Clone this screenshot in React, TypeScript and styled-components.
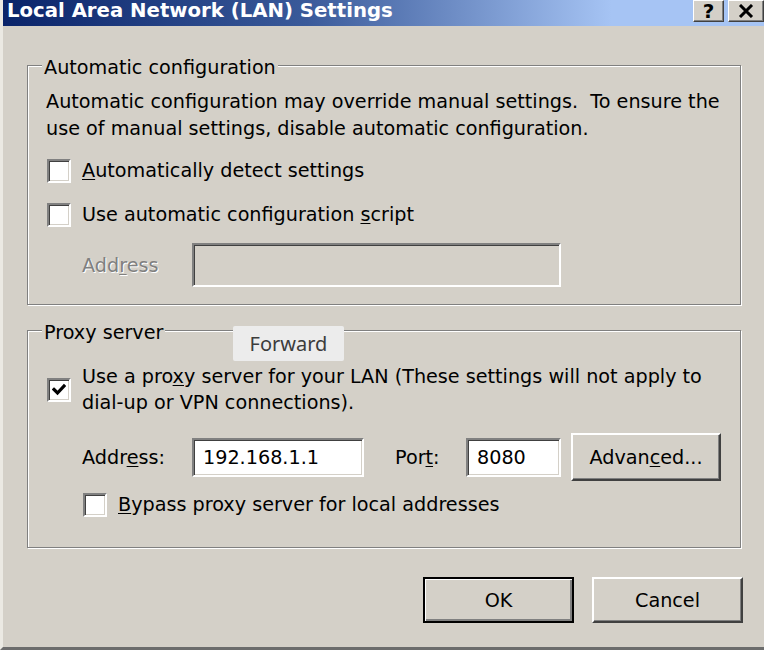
import React from "react";
import styled, { createGlobalStyle } from "styled-components";

const FACE = "#d4d0c8";
const FONT = `"DejaVu Sans", Verdana, sans-serif`;

const GlobalStyle = createGlobalStyle`
  html, body {
    margin: 0;
    padding: 0;
    background: ${FACE};
    overflow: hidden;
  }
  * { box-sizing: border-box; }
`;

const Window = styled.div`
  position: relative;
  width: 764px;
  height: 650px;
  background: ${FACE};
  border-left: 3px solid #ebe9e3;
  border-bottom: 3px solid #6c6c6c;
  display: flex;
  flex-direction: column;
  font-family: ${FONT};
  font-size: 19.2px;
  color: #000;
`;

const TitleBar = styled.div`
  height: 26px;
  flex: none;
  padding: 0 0 4px 4px;
  display: flex;
  align-items: center;
  background: linear-gradient(90deg, #0a246a 0%, #3a5a9a 40%, #a6c4f4 80%, #a6c4f4 100%);
`;

const Title = styled.span`
  flex: 1;
  color: #fff;
  font: bold 19.7px/22px ${FONT};
  white-space: nowrap;
`;

const CaptionButton = styled.div<{ $w: number }>`
  width: ${(p) => p.$w}px;
  height: 22px;
  margin-left: 4px;
  background: ${FACE};
  border: 1px solid;
  border-color: #fff #404040 #404040 #fff;
  box-shadow: inset -1px -1px #808080;
  display: flex;
  align-items: center;
  justify-content: center;
  font: bold 20px/20px ${FONT};
  color: #000;
`;

const Body = styled.div`
  flex: 1;
  padding: 25px 23px 0 24px;
  display: flex;
  flex-direction: column;
`;

const GroupBox = styled.fieldset<{ $pt: number; $pb: number; $mt?: number }>`
  margin: ${(p) => p.$mt ?? 0}px 0 0 0;
  min-width: 0;
  padding: ${(p) => p.$pt}px 20px ${(p) => p.$pb}px 18px;
  border: 1px solid #808080;
  box-shadow: inset 1px 1px #fff, 1px 1px #fff;
  display: flex;
  flex-direction: column;
`;

const Legend = styled.legend`
  margin-left: -4px;
  padding: 6px 2px 0;
  line-height: 22px;
  background: ${FACE};
`;

const Paragraph = styled.p`
  margin: 0;
  line-height: 27px;
  white-space: nowrap;
`;

const CheckRow = styled.div<{ $indent?: number; $mt?: number }>`
  display: flex;
  align-items: center;
  gap: 11px;
  min-height: 30px;
  margin-top: ${(p) => p.$mt ?? 0}px;
  margin-left: ${(p) => p.$indent ?? 1}px;
`;

const CheckBox = styled.span`
  flex: none;
  width: 24px;
  height: 24px;
  background: #fff;
  border: 2px solid;
  border-color: #808080 #fff #fff #808080;
  box-shadow: inset 1px 1px #404040, inset -1px -1px ${FACE};
  display: flex;
  align-items: center;
  justify-content: center;
`;

const CheckLabel = styled.span`
  line-height: 26px;
  white-space: nowrap;
`;

const FieldRow = styled.div<{ $mt: number }>`
  display: flex;
  align-items: center;
  margin-top: ${(p) => p.$mt}px;
  margin-left: 36px;
`;

const FieldLabel = styled.span<{ $w: number; $ml?: number; $disabled?: boolean }>`
  flex: none;
  width: ${(p) => p.$w}px;
  margin-left: ${(p) => p.$ml ?? 0}px;
  white-space: nowrap;
  color: ${(p) => (p.$disabled ? "#808080" : "#000")};
  text-shadow: ${(p) => (p.$disabled ? "1px 1px 0 #fff" : "none")};
`;

const TextBox = styled.input<{ $w: number; $h: number; $disabled?: boolean }>`
  flex: none;
  width: ${(p) => p.$w}px;
  height: ${(p) => p.$h}px;
  margin: 0;
  padding: 0 0 0 9px;
  background: ${(p) => (p.$disabled ? FACE : "#fff")};
  border: 2px solid;
  border-color: #808080 #fff #fff #808080;
  box-shadow: inset 1px 1px #404040, inset -1px -1px ${FACE};
  font: 19.2px ${FONT};
  color: #000;
  outline: none;
`;

const PushButton = styled.button<{ $w: number; $h: number; $default?: boolean; $ml?: number }>`
  flex: none;
  width: ${(p) => p.$w}px;
  height: ${(p) => p.$h}px;
  margin: 0 0 0 ${(p) => p.$ml ?? 0}px;
  padding: 0;
  background: ${FACE};
  font: 19.2px ${FONT};
  color: #000;
  border: 2px solid;
  border-color: ${(p) => (p.$default ? "#000" : "#fff #404040 #404040 #fff")};
  box-shadow: ${(p) =>
    p.$default
      ? "inset 1px 1px #fff, inset -2px -2px #808080"
      : "inset -1px -1px #808080"};
  cursor: default;
`;

const Footer = styled.div`
  display: flex;
  justify-content: flex-end;
  gap: 18px;
  margin: 29px -2px 0 0;
`;

const Key = styled.span`
  text-decoration: underline;
  text-underline-offset: 2px;
  text-decoration-thickness: 1px;
`;

const Tooltip = styled.div`
  position: absolute;
  left: 230px;
  top: 326px;
  width: 111px;
  height: 35px;
  border-radius: 2px;
  background: #ececec;
  color: #3c3c3c;
  font: 20px/35px "Noto Sans", sans-serif;
  text-align: center;
`;

const Check = () => (
  <svg width="14" height="14" viewBox="0 0 14 14">
    <path d="M2 6.5 L5.5 10 L12 3" fill="none" stroke="#000" strokeWidth="3.2" strokeLinecap="square" />
  </svg>
);

const CloseGlyph = () => (
  <svg width="16" height="14" viewBox="0 0 16 14">
    <path d="M2 1 L14 13 M14 1 L2 13" stroke="#000" strokeWidth="3" />
  </svg>
);

export default function App() {
  return (
    <>
      <GlobalStyle />
      <Window>
        <TitleBar>
          <Title>Local Area Network (LAN) Settings</Title>
          <CaptionButton $w={31}>?</CaptionButton>
          <CaptionButton $w={36}>
            <CloseGlyph />
          </CaptionButton>
        </TitleBar>
        <Body>
          <GroupBox $pt={9} $pb={17}>
            <Legend>Automatic configuration</Legend>
            <Paragraph>
              Automatic configuration may override manual settings.{"\u00a0"} To ensure the
              <br />
              use of manual settings, disable automatic configuration.
            </Paragraph>
            <CheckRow $mt={14}>
              <CheckBox />
              <CheckLabel>
                <Key>A</Key>utomatically detect settings
              </CheckLabel>
            </CheckRow>
            <CheckRow $mt={14}>
              <CheckBox />
              <CheckLabel>
                Use automatic configuration <Key>s</Key>cript
              </CheckLabel>
            </CheckRow>
            <FieldRow $mt={13}>
              <FieldLabel $w={110} $disabled>
                Add<Key>r</Key>ess
              </FieldLabel>
              <TextBox $w={369} $h={44} $disabled readOnly defaultValue="" />
            </FieldRow>
          </GroupBox>

          <GroupBox $pt={20} $pb={27} $mt={11}>
            <Legend>Proxy server</Legend>
            <CheckRow>
              <CheckBox>
                <Check />
              </CheckBox>
              <CheckLabel>
                Use a pro<Key>x</Key>y server for your LAN (These settings will not apply to
                <br />
                dial-up or VPN connections).
              </CheckLabel>
            </CheckRow>
            <FieldRow $mt={17}>
              <FieldLabel $w={110}>
                Addr<Key>e</Key>ss:
              </FieldLabel>
              <TextBox $w={172} $h={39} readOnly defaultValue="192.168.1.1" />
              <FieldLabel $w={71} $ml={31}>
                Por<Key>t</Key>:
              </FieldLabel>
              <TextBox $w={95} $h={39} readOnly defaultValue="8080" />
              <PushButton $w={150} $h={48} $ml={10}>
                Advan<Key>c</Key>ed...
              </PushButton>
            </FieldRow>
            <CheckRow $indent={37} $mt={9}>
              <CheckBox />
              <CheckLabel>
                <Key>B</Key>ypass proxy server for local addresses
              </CheckLabel>
            </CheckRow>
          </GroupBox>

          <Footer>
            <PushButton $w={151} $h={46} $default>
              OK
            </PushButton>
            <PushButton $w={151} $h={46}>
              Cancel
            </PushButton>
          </Footer>
        </Body>
        <Tooltip>Forward</Tooltip>
      </Window>
    </>
  );
}
